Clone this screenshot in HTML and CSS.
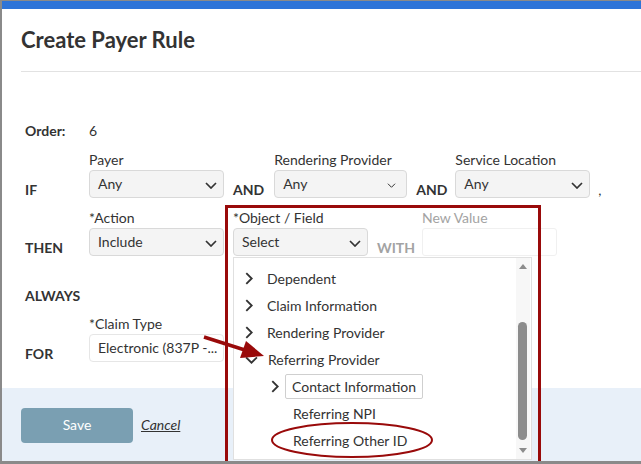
FILE: index.html
```html
<!DOCTYPE html>
<html lang="en">

<head>
    <meta charset="UTF-8">
    <title>Create Payer Rule</title>
    <link rel="stylesheet" href="styles.css">
</head>

<body>
    <div class="window">
        <div class="topbar"></div>
        <div class="header">
            <h1>Create Payer Rule</h1>
        </div>

        <div class="content">
            <div class="row order">
                <div class="row-label">Order:</div>
                <div class="value">6</div>
            </div>

            <div class="row">
                <div class="row-label">IF</div>
                <div class="field">
                    <label>Payer</label>
                    <div class="select w135">Any<svg class="chev" viewBox="0 0 12 7"><path d="M1 1l5 5 5-5"/></svg></div>
                </div>
                <div class="join">AND</div>
                <div class="field">
                    <label>Rendering Provider</label>
                    <div class="select w133">Any<svg class="chev small" viewBox="0 0 12 7"><path d="M1 1l5 5 5-5"/></svg></div>
                </div>
                <div class="join tight">AND</div>
                <div class="field">
                    <label>Service Location</label>
                    <div class="select w135">Any<svg class="chev" viewBox="0 0 12 7"><path d="M1 1l5 5 5-5"/></svg></div>
                </div>
                <div class="comma">,</div>
            </div>

            <div class="row">
                <div class="row-label">THEN</div>
                <div class="field">
                    <label>*Action</label>
                    <div class="select w135">Include<svg class="chev" viewBox="0 0 12 7"><path d="M1 1l5 5 5-5"/></svg></div>
                </div>
                <div class="field object">
                    <label>*Object / Field</label>
                    <div class="select w135">Select<svg class="chev" viewBox="0 0 12 7"><path d="M1 1l5 5 5-5"/></svg></div>

                    <div class="dropdown">
                        <ul class="tree">
                            <li class="partial"><svg class="arrow-r" viewBox="0 0 7 12"><path d="M1 1l5 5-5 5"/></svg></li>
                            <li><svg class="arrow-r" viewBox="0 0 7 12"><path d="M1 1l5 5-5 5"/></svg>Dependent</li>
                            <li><svg class="arrow-r" viewBox="0 0 7 12"><path d="M1 1l5 5-5 5"/></svg>Claim Information</li>
                            <li><svg class="arrow-r" viewBox="0 0 7 12"><path d="M1 1l5 5-5 5"/></svg>Rendering Provider</li>
                            <li><svg class="arrow-d" viewBox="0 0 12 7"><path d="M1 1l5 5 5-5"/></svg>Referring Provider</li>
                            <li class="sub"><svg class="arrow-r" viewBox="0 0 7 12"><path d="M1 1l5 5-5 5"/></svg><span class="focus">Contact Information</span></li>
                            <li class="leaf">Referring NPI</li>
                            <li class="leaf">Referring Other ID</li>
                        </ul>
                        <div class="scrollbar">
                            <span class="up"></span>
                            <span class="thumb"></span>
                            <span class="down"></span>
                        </div>
                    </div>
                </div>
                <div class="join muted with">WITH</div>
                <div class="field">
                    <label class="muted">New Value</label>
                    <div class="input"></div>
                </div>
            </div>

            <div class="row always">
                <div class="row-label">ALWAYS</div>
            </div>

            <div class="row">
                <div class="row-label">FOR</div>
                <div class="field">
                    <label>*Claim Type</label>
                    <div class="select plain w135">Electronic (837P -...</div>
                </div>
            </div>
        </div>

        <div class="footer">
            <button class="btn-save">Save</button>
            <a class="cancel" href="#">Cancel</a>
        </div>

        <!-- annotation marks -->
        <div class="mark-box"></div>
        <svg class="marks" viewBox="0 0 641 464">
            <line x1="204" y1="337" x2="248" y2="351"/>
            <polygon points="264,356 240,358 246,341"/>
            <ellipse cx="352" cy="440" rx="80" ry="17"/>
        </svg>
    </div>
</body>

</html>
```

FILE: styles.css
```css
* {
    box-sizing: border-box;
}

body {
    margin: 0;
    font-family: Lato, "Open Sans", sans-serif;
    color: #333;
    background: #fff;
}

.window {
    position: relative;
    width: 641px;
    height: 464px;
    overflow: hidden;
    border-left: 2px solid #8a8a8a;
    border-top: 1px solid #8a8a8a;
    border-bottom: 3px solid #8a8a8a;
    background: #fff;
}

.topbar {
    height: 8px;
    background-color: #2e74d8;
}

.header {
    height: 63px;
    margin-left: 19px;
    padding-top: 18px;
    border-bottom: 1px solid #e2e2e2;
}

.header h1 {
    margin: 0;
    font-size: 22px;
    line-height: 26px;
    font-weight: bold;
    color: #333;
}

.content {
    padding: 49px 0 0 23px;
    height: 316px;
}

.row {
    display: flex;
    align-items: flex-end;
    margin-bottom: 10px;
}

.row.order {
    margin-bottom: 9px;
}

.row.order .row-label {
    margin-bottom: 0;
}

.row.always {
    margin-top: 30px;
    margin-bottom: 10px;
}

.row-label {
    width: 64px;
    font-size: 14px;
    font-weight: bold;
    line-height: 20px;
    margin-bottom: -2px;
    flex-shrink: 0;
}

.value {
    font-size: 14px;
    line-height: 20px;
}

.field {
    display: flex;
    flex-direction: column;
}

.field label {
    font-size: 14px;
    line-height: 20px;
}

.object {
    position: relative;
    margin-left: 9px;
}

.muted {
    color: #a3a3a3;
}

.select {
    position: relative;
    height: 28px;
    padding-left: 8px;
    font-size: 14px;
    line-height: 26px;
    background: #f4f4f4;
    border: 1px solid #d9d9d9;
    border-radius: 4px;
    white-space: nowrap;
}

.select.plain {
    background: #fff;
    border-color: #e6e6e6;
}

.w135 {
    width: 135px;
}

.w133 {
    width: 133px;
}

.chev {
    position: absolute;
    right: 6px;
    top: 11px;
    width: 12px;
    height: 7px;
    fill: none;
    stroke: #333;
    stroke-width: 1.7;
}

.chev.small {
    width: 9px;
    height: 5px;
    right: 10px;
    top: 12px;
    stroke-width: 1.4;
}

.input {
    width: 135px;
    height: 28px;
    border: 1px solid #f0f0f0;
    border-radius: 3px;
}

.join {
    font-size: 14px;
    font-weight: bold;
    line-height: 20px;
    margin: 0 10px -2px 9px;
}

.join.tight {
    margin-right: 8px;
}

.join.with {
    margin-right: 7px;
}

.comma {
    font-size: 14px;
    line-height: 20px;
    margin: 0 0 -2px 8px;
}

.footer {
    height: 74px;
    padding: 20px 0 0 19px;
    background-color: #e8f0f9;
    display: flex;
    align-items: flex-start;
}

.btn-save {
    width: 112px;
    height: 35px;
    border: none;
    border-radius: 4px;
    background-color: #7a9fb2;
    color: #fff;
    font-family: inherit;
    font-size: 14px;
    padding-bottom: 3px;
}

.cancel {
    margin-left: 8px;
    line-height: 33px;
    font-size: 14px;
    font-style: italic;
    color: #333;
}

/* object / field dropdown */
.dropdown {
    position: absolute;
    top: 49px;
    left: 0;
    width: 299px;
    height: 203px;
    background: #fff;
    border: 1px solid #e0e0e0;
    overflow: hidden;
    z-index: 2;
}

.tree {
    list-style: none;
    margin: -20px 0 0 0;
    padding: 0;
}

.tree li {
    display: flex;
    align-items: center;
    height: 27px;
    padding-left: 11px;
    font-size: 14px;
}

.tree li.sub {
    padding-left: 37px;
}

.tree li.leaf {
    padding-left: 59px;
}

.arrow-r {
    width: 8px;
    height: 13px;
    margin-right: 14px;
    fill: none;
    stroke: #333;
    stroke-width: 1.7;
}

.arrow-d {
    width: 13px;
    height: 8px;
    margin-right: 10px;
    fill: none;
    stroke: #333;
    stroke-width: 1.7;
}

.sub .arrow-r {
    margin-right: 6px;
}

.focus {
    display: inline-block;
    height: 25px;
    line-height: 23px;
    padding: 0 6px;
    border: 1px solid #cfcfcf;
    border-radius: 2px;
}

.scrollbar {
    position: absolute;
    top: 0;
    right: 1px;
    width: 14px;
    height: 100%;
    background: #f7f7f7;
}

.scrollbar .up,
.scrollbar .down {
    position: absolute;
    left: 3px;
    width: 0;
    height: 0;
    border-left: 4px solid transparent;
    border-right: 4px solid transparent;
}

.scrollbar .up {
    top: 6px;
    border-bottom: 5px solid #8c8c8c;
}

.scrollbar .down {
    bottom: 6px;
    border-top: 5px solid #8c8c8c;
}

.scrollbar .thumb {
    position: absolute;
    left: 2px;
    top: 64px;
    width: 9px;
    height: 118px;
    border-radius: 5px;
    background: #8c8c8c;
}

/* annotations */
.mark-box {
    position: absolute;
    left: 223px;
    top: 204px;
    width: 316px;
    height: 262px;
    border: 3px solid #990a0a;
    z-index: 3;
}

.marks {
    position: absolute;
    left: -2px;
    top: -1px;
    width: 641px;
    height: 464px;
    z-index: 4;
    pointer-events: none;
}

.marks line {
    stroke: #990a0a;
    stroke-width: 3.5;
}

.marks polygon {
    fill: #990a0a;
}

.marks ellipse {
    fill: none;
    stroke: #990a0a;
    stroke-width: 2;
}
```
